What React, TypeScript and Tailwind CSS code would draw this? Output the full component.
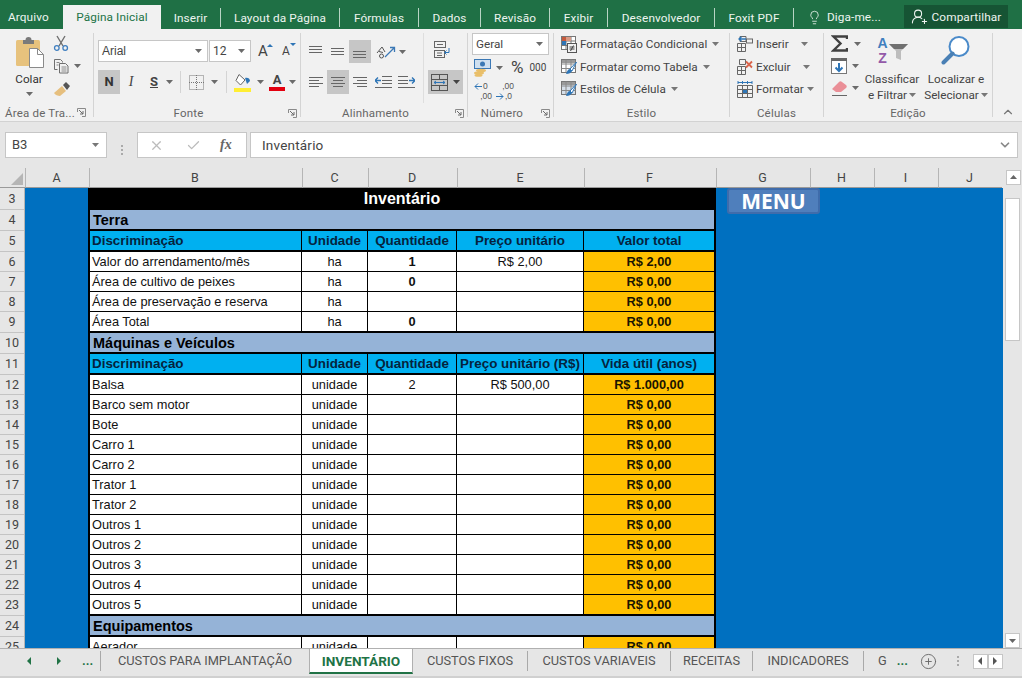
import React from "react";
import { Lightbulb, UserRoundPlus, X, Check, CirclePlus, ChevronUp, ChevronDown } from "lucide-react";

const Caret = ({ c = "#6b6b6b" }: { c?: string }) => (
  <svg width="7" height="4" viewBox="0 0 7 4" className="shrink-0"><path d="M0 0h7L3.5 4z" fill={c} /></svg>
);

const Launcher = () => (
  <svg width="9" height="9" viewBox="0 0 9 9" className="shrink-0">
    <path d="M.5 4V.5H8.5V8.500H5" fill="none" stroke="#8a8a8a" />
    <path d="M2 2l4 4M6 3v3H3" fill="none" stroke="#6b6b6b" />
  </svg>
);

const Sep = ({ h = "h-[84px]" }: { h?: string }) => <div className={`w-px ${h} mt-[4px] bg-[#d4d4d4] shrink-0`} />;

const Group = ({ w, label, launcher, labelLeft, children }: { w: string; label: string; launcher?: boolean; labelLeft?: boolean; children: React.ReactNode }) => (
  <div className={`${w} flex flex-col shrink-0`}>
    <div className="h-[75px] flex">{children}</div>
    <div className={`h-[17px] flex items-center text-[#666] text-[11.500px] tracking-[0.2px] ${labelLeft ? "pl-[5px] pr-[7px] justify-between" : launcher ? "justify-center relative pr-[17px]" : "justify-center"}`}>
      <span>{label}</span>
      {launcher && (labelLeft ? <Launcher /> : <span className="absolute right-[3px] top-[5px] flex"><Launcher /></span>)}
    </div>
  </div>
);

const Lines = ({ rows, c = "#666" }: { rows: [number, number, number][]; c?: string }) => (
  <svg width="16" height="14" viewBox="0 0 16 14">
    {rows.map(([y, a, b], i) => <path key={i} d={`M${a} ${y + 0.5}H${b}`} stroke={c} />)}
  </svg>
);

const Btn = ({ on, children, w = "w-[22px]", h = "h-full" }: { on?: boolean; children: React.ReactNode; w?: string; h?: string }) => (
  <div className={`${w} ${h} flex items-center justify-center gap-[4px] shrink-0 ${on ? "bg-[#c6c6c6]" : ""}`}>{children}</div>
);

const PasteIcon = () => (
  <svg width="29" height="32" viewBox="0 0 29 32" className="ml-[3px]">
    <rect x="0" y="4" width="24" height="26" rx="1.5" fill="#e7c27d" />
    <path d="M7 4h2.500a3 3 0 0 1 6 0H18v4H7z" fill="#7a7a7a" />
    <path d="M13.500 12.500h8l6 6v13h-14z" fill="#fff" stroke="#8a8a8a" />
    <path d="M21.500 12.500v6h6" fill="none" stroke="#8a8a8a" />
  </svg>
);
const CutIcon = () => (
  <svg width="16" height="16" viewBox="0 0 16 16" fill="none">
    <path d="M4 1l6 10M12 1L6 11" stroke="#6f6f6f" strokeWidth="1.400" />
    <circle cx="3.800" cy="13" r="2.300" stroke="#3f7fc0" strokeWidth="1.300" />
    <circle cx="12.200" cy="13" r="2.300" stroke="#3f7fc0" strokeWidth="1.300" />
  </svg>
);
const CopyIcon = () => (
  <svg width="16" height="16" viewBox="0 0 16 16" fill="none" stroke="#6f6f6f">
    <path d="M1.500 1.500h6l2 2v1M1.500 1.500v10h3" />
    <path d="M6.500 5.500h6l2.500 2.500v7h-8.500z" fill="#f1f1f1" />
    <path d="M3.500 4.500h3M3.500 7h2M8.500 9h5M8.500 11h5M8.500 13h5" stroke="#8a8a8a" />
  </svg>
);
const BrushIcon = () => (
  <svg width="18" height="16" viewBox="0 0 18 16">
    <path d="M1 12L9 5l4 5-6 5c-2 0-5-1-6-3z" fill="#e6bf7e" />
    <path d="M10 4l3-3 4 4-3 4z" fill="#555" />
  </svg>
);
const BordersIcon = () => (
  <svg width="15" height="15" viewBox="0 0 15 15" fill="none" stroke="#777" strokeDasharray="1 1">
    <path d="M.5.500h14v14H.5zM7.500 0v15M0 7.500h15" />
  </svg>
);
const FillIcon = () => (
  <svg width="18" height="19" viewBox="0 0 18 19">
    <path d="M5 1.500L11 7l-4.500 5L2 7.500z" fill="#fff" stroke="#666" />
    <path d="M11 5c2-1 5 0 5 3l-3 3z" fill="#2e75b6" />
    <rect x="0" y="15" width="17" height="4" fill="#ffee33" />
  </svg>
);
const OrientIcon = () => (
  <svg width="20" height="16" viewBox="0 0 20 16" fill="none" stroke="#555">
    <path d="M1 9l5-6 3 5M3 7.500l4 1" />
    <circle cx="5.500" cy="12" r="2" />
    <path d="M9 13L18 4M14 3.500h4.500V8" stroke="#3b78b5" strokeWidth="1.300" />
  </svg>
);
const WrapIcon = () => (
  <svg width="17" height="17" viewBox="0 0 17 17" fill="none" stroke="#666">
    <rect x=".5" y=".5" width="11" height="6" />
    <rect x=".5" y="9.500" width="10" height="7" />
    <path d="M3 3.500h6M3 12h5M3 14.500h5" />
    <path d="M15 7v4.500h-4M12.500 9.500l-2 2 2 2" stroke="#2e75b6" />
  </svg>
);
const IndentIcon = ({ flip }: { flip?: boolean }) => (
  <svg width="17" height="14" viewBox="0 0 17 14" fill="none" className={flip ? "-scale-x-100" : ""}>
    <path d="M7 1.500h10M7 5.500h10M7 8.500h10M0 12.500h17" stroke="#666" />
    <path d="M0 5.500h6M3 2.500l-3 3 3 3" stroke="#2e75b6" strokeWidth="1.300" />
  </svg>
);
const MergeIcon = () => (
  <svg width="17" height="17" viewBox="0 0 17 17" fill="none" stroke="#555">
    <rect x=".5" y=".5" width="16" height="16" />
    <path d="M.5 5.500h16M.5 11.500h16M8.500 .5v5M8.500 11.500v5" />
    <path d="M3 8.500h11M5 7l-2 1.500L5 10M12 7l2 1.500L12 10" stroke="#2e75b6" />
  </svg>
);
const MoneyIcon = () => (
  <svg width="17" height="18" viewBox="0 0 17 18">
    <rect x=".5" y=".5" width="16" height="9" fill="#cfe0f0" stroke="#3b78b5" />
    <circle cx="8.500" cy="5" r="2.500" fill="#3b78b5" />
    <ellipse cx="7" cy="11.500" rx="5" ry="1.800" fill="#e9bf6a" />
    <ellipse cx="5" cy="14" rx="5" ry="1.800" fill="#e9bf6a" />
    <ellipse cx="4.500" cy="16.300" rx="4" ry="1.500" fill="#e9bf6a" />
  </svg>
);
const ArrowL = () => (
  <svg width="8" height="7" viewBox="0 0 8 7" fill="none" className="shrink-0"><path d="M8 3.500H1M4 .5l-3 3 3 3" stroke="#2e75b6" /></svg>
);
const ArrowR = () => (
  <svg width="8" height="7" viewBox="0 0 8 7" fill="none" className="shrink-0"><path d="M0 3.500h7M4 .5l3 3-3 3" stroke="#2e75b6" /></svg>
);
const GridBase = ({ c = "#777" }: { c?: string }) => (
  <>
    <rect x=".5" y=".5" width="14" height="13" fill="#fff" stroke={c} />
    <path d="M.5 5h14M.5 9.500h14M5 .5v13M10 .5v13" stroke={c} />
  </>
);
const CondIcon = () => (
  <svg width="16" height="17" viewBox="0 0 16 17" className="shrink-0">
    <GridBase />
    <rect x="1" y="1" width="4" height="4" fill="#c55a3c" />
    <rect x="5" y="1" width="5" height="4" fill="#d99b86" />
    <rect x="1" y="5" width="4" height="4" fill="#2e75b6" />
    <rect x="6.500" y="7.500" width="9" height="9" fill="#f1f1f1" stroke="#555" />
    <path d="M8.500 11h5M8.500 13h5M12.500 9.500l-3 5.500" stroke="#444" />
  </svg>
);
const TableIcon = ({ blue }: { blue?: boolean }) => (
  <svg width="16" height="16" viewBox="0 0 16 16" className="shrink-0">
    <rect x=".5" y=".5" width="14" height="13" fill={blue ? "#d6dfe9" : "#fff"} stroke="#777" />
    <rect x="1" y="1" width="13" height="3" fill="#9a9a9a" />
    <path d="M.5 5h14M.5 9.500h14M5 .5v13M10 .5v13" stroke="#888" />
    <path d="M15.500 3L9 10l2 2z" fill="#fff" stroke="#2e75b6" />
    <path d="M9 10c-2 0-3 2-4 5 3 0 5-1 6-3z" fill="#2e75b6" />
  </svg>
);
const InsIcon = () => (
  <svg width="16" height="16" viewBox="0 0 16 16" fill="none" className="shrink-0">
    <path d="M.5 7.500h8v8h-8zM4.500 7.500v8M.5 11.500h8M3 .5h6v5H3z" stroke="#666" />
    <rect x="9.500" y="3" width="6" height="4" stroke="#666" />
    <path d="M9 3H2M4.500 .8L2 3l2.500 2.200" stroke="#2e75b6" strokeWidth="1.300" />
  </svg>
);
const DelIcon = () => (
  <svg width="16" height="16" viewBox="0 0 16 16" fill="none" className="shrink-0">
    <path d="M.5 7.500h8v8h-8zM4.500 7.500v8M.5 11.500h8M2.500.5h6v5h-6z" stroke="#666" />
    <path d="M9 2.500l6 6M15 2.500l-6 6" stroke="#d9634a" strokeWidth="1.800" />
  </svg>
);
const FmtIcon = () => (
  <svg width="16" height="17" viewBox="0 0 16 17" fill="none" className="shrink-0">
    <path d="M.5 4.500h15v12H.5zM5.500 4.500v12M10.500 4.500v12M.5 8.500h15M.5 12.500h15" stroke="#666" />
    <rect x="6" y="9" width="4" height="3" fill="#2e75b6" />
    <path d="M1 1.500h14M1 0v3M15 0v3M5.500 0v3M10.500 0v3" stroke="#2e75b6" />
  </svg>
);
const SumIcon = () => (
  <svg width="17" height="17" viewBox="0 0 17 17"><path d="M16 4V1.500H2.500L9.500 8.500 2.500 15.500H16V13" fill="none" stroke="#404040" strokeWidth="2.400" /></svg>
);
const DownFill = () => (
  <svg width="16" height="16" viewBox="0 0 16 16">
    <rect x=".5" y=".5" width="15" height="15" fill="#fff" stroke="#777" />
    <rect x="0" y="0" width="16" height="3" fill="#666" />
    <path d="M8 5v8M4.500 9.500L8 13l3.500-3.500" fill="none" stroke="#2e75b6" strokeWidth="2" />
  </svg>
);
const Eraser = () => (
  <svg width="17" height="16" viewBox="0 0 17 16">
    <path d="M1 9l7-7c1-1 2-1 3 0l4 3c1 1 1 2 0 3l-5 4H5z" fill="#ea8f97" />
    <path d="M1 15.500h15" stroke="#666" />
  </svg>
);
const Funnel = () => (
  <svg width="19" height="16" viewBox="0 0 19 16"><path d="M0 0h19l-7 7v9l-5-2V7z" fill="#bdbdbd" /><path d="M0 0h19l-5 5H5z" fill="#707070" /></svg>
);
const Glass = () => (
  <svg width="30" height="30" viewBox="0 0 30 30" fill="none">
    <circle cx="18" cy="11.500" r="9.500" stroke="#4a8ac9" strokeWidth="2" fill="#fff" />
    <path d="M11.500 18.500L2.500 27.500" stroke="#4a80b5" strokeWidth="4" strokeLinecap="round" />
  </svg>
);

const tabs: [string, string][] = [["Inserir", "w-[60px]"], ["Layout da Página", "w-[119px]"], ["Fórmulas", "w-[79px]"], ["Dados", "w-[62px]"], ["Revisão", "w-[69px]"], ["Exibir", "w-[58px]"], ["Desenvolvedor", "w-[107px]"], ["Foxit PDF", "w-[79px]"]];

const TitleBar = () => (
  <div className="h-[29px] bg-[#1f7045] flex text-[#eef5f0] shrink-0 tracking-[0.1px] text-[11.800px]">
    <div className="w-[63px] shrink-0 pl-[8px] pt-[9px] leading-[17px]">Arquivo</div>
    <div className="w-[98px] shrink-0 mt-[5px] bg-[#f1f1f1] text-[#217346] flex items-center justify-center">Página Inicial</div>
    {tabs.map(([t, w]) => (
      <div key={t} className={`${w} shrink-0 flex items-center h-full pt-[5px]`}>
        <div className="flex-1 text-center pt-[1px]">{t}</div>
        <div className="w-px h-[19px] bg-[#b8d4c4]" />
      </div>
    ))}
    <div className="flex items-center pt-[5px] pl-[13px] gap-[5px] w-[110px] shrink-0">
      <Lightbulb size={15} strokeWidth={1.300} className="shrink-0" />
      <span>Diga-me...</span>
    </div>
    <div className="w-[104px] h-[23px] mt-[5px] bg-[#165434] flex items-center justify-center gap-[4px] shrink-0">
      <UserRoundPlus size={17} strokeWidth={1.500} className="shrink-0" />
      <span>Compartilhar</span>
    </div>
  </div>
);

const Ribbon = () => (
  <div className="h-[93px] bg-[#f1f1f1] border-b border-[#d2d2d2] flex shrink-0 text-[#444] text-[11.700px]">
    <Group w="w-[93px]" label="Área de Tra..." launcher labelLeft>
      <div className="ml-[11px] w-[36px] flex flex-col items-center pt-[7px]">
        <PasteIcon />
        <span className="mt-[3px] leading-[16px] text-[#333]">Colar</span>
        <div className="mt-[5px]"><Caret /></div>
      </div>
      <div className="ml-[6px] pt-[6px] flex flex-col gap-[7px]">
        <CutIcon />
        <div className="flex items-center gap-[5px]"><CopyIcon /><Caret /></div>
        <BrushIcon />
      </div>
    </Group>
    <Sep />
    <Group w="w-[206px]" label="Fonte" launcher>
      <div className="pl-[4px] pt-[11px] flex flex-col gap-[8px]">
        <div className="flex items-center h-[22px] gap-[1px]">
          <div className="w-[110px] h-full bg-white border border-[#c6c6c6] flex items-center justify-between pl-[3px] pr-[5px] font-['Liberation_Sans',sans-serif] text-[12px]">
            <span>Arial</span><Caret />
          </div>
          <div className="w-[42px] h-full bg-white border border-[#c6c6c6] flex items-center justify-between pl-[3px] pr-[5px] text-[12px]">
            <span>12</span><Caret />
          </div>
          <div className="w-[22px] flex justify-center text-[15px] leading-none relative"><span>A</span><span className="absolute right-[1px] top-0 w-0 h-0 border-x-[3px] border-x-transparent border-b-[3px] border-b-[#2e75b6]" /></div>
          <div className="w-[22px] flex justify-center text-[12px] leading-none relative"><span>A</span><span className="absolute right-[1px] top-[-2px] w-0 h-0 border-x-[3px] border-x-transparent border-t-[3px] border-t-[#2e75b6]" /></div>
        </div>
        <div className="flex items-center h-[24px]">
          <Btn on><span className="font-bold text-[13px] text-[#333]">N</span></Btn>
          <Btn><span className="italic font-['Liberation_Serif',serif] text-[14px]">I</span></Btn>
          <Btn w="w-[24px]"><span className="font-bold text-[13px] underline">S</span></Btn>
          <div className="w-[7px] flex"><Caret /></div>
          <div className="w-px h-[22px] bg-[#d4d4d4] ml-[7px]" />
          <Btn w="w-[30px]"><BordersIcon /></Btn>
          <Caret />
          <div className="w-px h-[22px] bg-[#d4d4d4] ml-[8px]" />
          <div className="ml-[7px] flex items-center gap-[5px]"><FillIcon /><Caret /></div>
          <div className="ml-[5px] flex items-center gap-[4px]">
            <div className="w-[16px] flex flex-col items-center">
              <span className="font-bold text-[13px] leading-[14px] text-[#444]">A</span>
              <span className="w-[16px] h-[4px] bg-[#e3000f]" />
            </div>
            <Caret />
          </div>
        </div>
      </div>
    </Group>
    <Sep />
    <Group w="w-[166px]" label="Alinhamento" launcher>
      <div className="pl-[4px] pt-[11px] flex flex-col gap-[7px] w-[122px]">
        <div className="flex h-[23px] items-center">
          <Btn><Lines rows={[[1, 1, 14], [4, 1, 14], [7, 1, 14]]} /></Btn>
          <Btn><Lines rows={[[3, 1, 14], [6, 1, 14], [9, 1, 14]]} /></Btn>
          <Btn on><Lines rows={[[6, 1, 14], [9, 1, 14], [12, 1, 14]]} /></Btn>
          <div className="ml-[5px] flex items-center gap-[3px]"><OrientIcon /><Caret /></div>
        </div>
        <div className="flex h-[24px] items-center">
          <Btn><Lines rows={[[2, 1, 15], [5, 1, 11], [8, 1, 15], [11, 1, 11]]} /></Btn>
          <Btn on><Lines rows={[[2, 1, 15], [5, 3, 13], [8, 1, 15], [11, 3, 13]]} /></Btn>
          <Btn><Lines rows={[[2, 1, 15], [5, 5, 15], [8, 1, 15], [11, 5, 15]]} /></Btn>
          <Btn w="w-[24px]"><IndentIcon /></Btn>
          <Btn w="w-[22px]"><IndentIcon flip /></Btn>
        </div>
      </div>
      <div className="w-px h-[70px] mt-[4px] bg-[#dedede]" />
      <div className="pl-[4px] pt-[9px] flex flex-col gap-[9px] items-start">
        <Btn w="w-[28px]" h="h-[23px]"><WrapIcon /></Btn>
        <div className="w-[35px] h-[24px] bg-[#c6c6c6] flex items-center justify-center gap-[5px]"><MergeIcon /><Caret c="#444" /></div>
      </div>
    </Group>
    <Sep />
    <Group w="w-[85px]" label="Número" launcher>
      <div className="pl-[4px] pt-[4px] flex flex-col">
        <div className="w-[77px] h-[22px] bg-white border border-[#c6c6c6] flex items-center justify-between pl-[3px] pr-[5px]">
          <span>Geral</span><Caret />
        </div>
        <div className="flex items-center mt-[3px] h-[19px] pl-[2px]">
          <MoneyIcon />
          <div className="ml-[5px]"><Caret /></div>
          <span className="ml-[8px] text-[17px] leading-none text-[#444]">%</span>
          <span className="ml-[6px] text-[10px] leading-none">000</span>
        </div>
        <div className="flex items-start mt-[4px] pl-[2px] gap-[4px] text-[8.500px] text-[#555] font-['Liberation_Sans',sans-serif] leading-[10px]">
          <div className="flex flex-col w-[18px]">
            <div className="flex items-center h-[10px] gap-[1px]"><ArrowL /><span>0</span></div>
            <div className="h-[10px] text-right">,00</div>
          </div>
          <div className="flex flex-col w-[18px]">
            <div className="h-[10px] text-right">,00</div>
            <div className="flex items-center h-[10px] gap-[1px]"><ArrowR /><span>,0</span></div>
          </div>
        </div>
      </div>
    </Group>
    <Sep />
    <Group w="w-[175px]" label="Estilo">
      <div className="pl-[7px] pt-[4px] flex flex-col gap-[0px]">
        {[["Formatação Condicional", <CondIcon key="a" />], ["Formatar como Tabela", <TableIcon key="b" />], ["Estilos de Célula", <TableIcon key="c" blue />]].map(([t, ic], i) => (
          <div key={i} className="h-[22.500px] flex items-center gap-[3px]">
            {ic}<span>{t}</span><div className="ml-[2px]"><Caret c="#777" /></div>
          </div>
        ))}
      </div>
    </Group>
    <Sep />
    <Group w="w-[93px]" label="Células">
      <div className="pl-[7px] pt-[4px] flex flex-col">
        <div className="h-[22.500px] flex items-center gap-[3px]"><InsIcon /><span>Inserir</span><div className="ml-[9px]"><Caret c="#777" /></div></div>
        <div className="h-[22.500px] flex items-center gap-[3px]"><DelIcon /><span>Excluir</span><div className="ml-[9px]"><Caret c="#777" /></div></div>
        <div className="h-[22.500px] flex items-center gap-[3px]"><FmtIcon /><span>Formatar</span><Caret c="#777" /></div>
      </div>
    </Group>
    <Sep />
    <Group w="w-[168px]" label="Edição">
      <div className="pl-[7px] pt-[6px] flex flex-col gap-[6px] w-[40px]">
        <div className="flex items-center gap-[6px]"><SumIcon /><Caret /></div>
        <div className="flex items-center gap-[5px]"><DownFill /><Caret /></div>
        <div className="flex items-center gap-[4px]"><Eraser /><Caret /></div>
      </div>
      <div className="w-[62px] ml-[-3px] flex flex-col items-center pt-[7px]">
        <div className="h-[35px] w-[31px] flex items-start">
          <div className="flex flex-col font-bold text-[14px] leading-[15px] font-['Liberation_Sans',sans-serif] items-center w-[12px]">
            <span className="text-[#3f7fbf]">A</span><span className="text-[#9359a8]">Z</span>
          </div>
          <div className="mt-[8px]"><Funnel /></div>
        </div>
        <span className="leading-[16px]">Classificar</span>
        <span className="leading-[16px] flex items-center gap-[2px]">e Filtrar <Caret c="#777" /></span>
      </div>
      <div className="w-[64px] ml-[1px] flex flex-col items-center pt-[6px]">
        <div className="h-[36px]"><Glass /></div>
        <span className="leading-[16px]">Localizar e</span>
        <span className="leading-[16px] flex items-center gap-[2px]">Selecionar <Caret c="#777" /></span>
      </div>
    </Group>
    <Sep />
    <div className="flex-1 flex items-end justify-center pb-[2px]"><ChevronUp size={14} color="#777" /></div>
  </div>
);

const FormulaBar = () => (
  <div className="h-[46px] flex pt-[10px] pl-[5px] shrink-0 text-[#444]">
    <div className="w-[102px] h-[26px] bg-white border border-[#c6c6c6] flex items-center justify-between pl-[6px] pr-[7px] text-[13px]">
      <span>B3</span><Caret c="#777" />
    </div>
    <div className="w-[30px] flex items-center justify-center gap-0">
      <div className="flex flex-col gap-[2px]">
        <span className="w-[2px] h-[2px] bg-[#aaa]" /><span className="w-[2px] h-[2px] bg-[#aaa]" /><span className="w-[2px] h-[2px] bg-[#aaa]" />
      </div>
    </div>
    <div className="w-[110px] h-[26px] bg-white border border-[#c6c6c6] flex items-center text-[#bbb] pl-[11px]">
      <X size={15} strokeWidth={2} />
      <Check size={15} strokeWidth={2} className="ml-[22px]" />
      <span className="ml-[19px] font-['Liberation_Serif',serif] italic font-bold text-[14px] text-[#666]">fx</span>
    </div>
    <div className="w-[768px] ml-[3px] h-[26px] bg-white border border-[#c6c6c6] flex items-center justify-between pl-[11px] pr-[5px]">
      <span className="text-[13.500px] tracking-[0.2px]">Inventário</span>
      <ChevronDown size={14} strokeWidth={3} color="#888" />
    </div>
  </div>
);

const cols: [string, string][] = [["A", "w-[64px]"], ["B", "w-[213px]"], ["C", "w-[66px]"], ["D", "w-[89px]"], ["E", "w-[127px]"], ["F", "w-[132px]"], ["G", "w-[94px]"], ["H", "w-[64px]"], ["I", "w-[64px]"], ["J", "w-[64px]"]];

const ColHeaders = () => (
  <div className="h-[20px] flex shrink-0 text-[#444] text-[12.500px]">
    <div className="w-[25px] h-full border-b border-[#9a9a9a] flex items-end justify-end pr-[2px] pb-[2px]">
      <div className="w-0 h-0 border-l-[12px] border-l-transparent border-b-[12px] border-b-[#b5b5b5]" />
    </div>
    {cols.map(([c, w]) => (
      <div key={c} className={`${w} h-full border-l border-b border-l-[#b5b5b5] border-b-[#9a9a9a] flex items-center justify-center pr-[2px]`}>{c}</div>
    ))}
  </div>
);

type Row = { n: number; h: string };
const rowsInfo: Row[] = [
  { n: 3, h: "h-[22px]" }, { n: 4, h: "h-[21px]" }, { n: 5, h: "h-[21px]" },
  ...[6, 7, 8].map((n) => ({ n, h: "h-[20px]" })),
  { n: 9, h: "h-[21px]" }, { n: 10, h: "h-[21px]" }, { n: 11, h: "h-[21px]" },
  ...[12, 13, 14, 15, 16, 17, 18, 19, 20, 21, 22].map((n) => ({ n, h: "h-[20px]" })),
  { n: 23, h: "h-[21px]" }, { n: 24, h: "h-[21px]" }, { n: 25, h: "h-[20px]" },
];

const colGrid = "grid grid-cols-[212px_66px_89px_127px_130px] items-stretch";
const cell = "border-r border-black flex items-center justify-center";

const Section = ({ t }: { t: string }) => (
  <div className="h-[21px] shrink-0 bg-[#95b3d7] border-b-2 border-black flex items-center pl-[3px] font-bold text-[14.500px] text-black">{t}</div>
);
const Head = ({ d, e, f }: { d: string; e: string; f: string }) => (
  <div className={`h-[21px] shrink-0 ${colGrid} bg-[#00b0f0] border-b-2 border-black font-bold text-[13.400px] text-[#05233d]`}>
    <div className={`${cell} !justify-start pl-[2px]`}>{d}</div>
    <div className={cell}>Unidade</div>
    <div className={cell}>Quantidade</div>
    <div className={cell}>{e}</div>
    <div className="flex items-center justify-center">{f}</div>
  </div>
);
const Data = ({ name, u, q, qb, p, t, thick }: { name: string; u: string; q?: string; qb?: boolean; p?: string; t: string; thick?: boolean }) => (
  <div className={`${thick ? "h-[21px] border-b-2" : "h-[20px] border-b"} shrink-0 ${colGrid} bg-white border-black text-[12.800px] text-[#111]`}>
    <div className={`${cell} !justify-start pl-[2px]`}>{name}</div>
    <div className={cell}>{u}</div>
    <div className={`${cell} ${qb ? "font-bold" : ""}`}>{q}</div>
    <div className={cell}>{p}</div>
    <div className="bg-[#ffc000] flex items-center justify-center font-bold text-[#1a1400]">{t}</div>
  </div>
);

const maquinas = ["Barco sem motor", "Bote", "Carro 1", "Carro 2", "Trator 1", "Trator 2", "Outros 1", "Outros 2", "Outros 3", "Outros 4", "Outros 5"];

const Sheet = () => (
  <div className="flex-1 min-h-0 flex overflow-hidden">
    <div className="w-[25px] flex flex-col shrink-0 text-[#444] text-[12.500px] border-r border-[#b5b5b5]">
      {rowsInfo.map((r) => (
        <div key={r.n} className={`${r.h} shrink-0 border-b border-[#c4c4c4] flex items-center justify-center`}>{r.n}</div>
      ))}
    </div>
    <div className="w-[978px] bg-[#0070c0] flex relative shrink-0 pl-[63px] font-['Liberation_Sans',sans-serif]">
      <div className="w-[628px] shrink-0 border-x-2 border-black flex flex-col bg-white">
        <div className="h-[22px] bg-black text-white font-bold text-[16px] flex items-center justify-center shrink-0">Inventário</div>
        <Section t="Terra" />
        <Head d="Discriminação" e="Preço unitário" f="Valor total" />
        <Data name="Valor do arrendamento/mês" u="ha" q="1" qb p="R$ 2,00" t="R$ 2,00" />
        <Data name="Área de cultivo de peixes" u="ha" q="0" qb t="R$ 0,00" />
        <Data name="Área de preservação e reserva" u="ha" t="R$ 0,00" />
        <Data name="Área Total" u="ha" q="0" qb t="R$ 0,00" thick />
        <Section t="Máquinas e Veículos" />
        <Head d="Discriminação" e="Preço unitário (R$)" f="Vida útil (anos)" />
        <Data name="Balsa" u="unidade" q="2" p="R$ 500,00" t="R$ 1.000,00" />
        {maquinas.map((m, i) => (
          <Data key={m} name={m} u="unidade" t="R$ 0,00" thick={i === maquinas.length - 1} />
        ))}
        <Section t="Equipamentos" />
        <Data name="Aerador" u="unidade" t="R$ 0,00" />
      </div>
      <div className="absolute left-[702px] top-0 w-[93px] h-[26px] rounded-[3px] bg-[#4f7fbc] border-2 border-[#3f6cab] flex items-center justify-center text-white font-bold text-[21px] font-['Open_Sans',sans-serif]">MENU</div>
    </div>
    <div className="flex-1 flex flex-col items-center bg-[#e6e6e6]">
      <div className="w-[15px] h-[143px] mt-[10px] bg-white border border-[#c6c6c6] shrink-0" />
      <div className="flex-1" />
      <div className="w-[15px] h-[15px] bg-white border border-[#c6c6c6] flex items-center justify-center shrink-0"><Caret c="#666" /></div>
    </div>
  </div>
);

const SheetTab = ({ t, w }: { t: string; w: string }) => (
  <div className="flex items-center h-[24px]">
    <div className={`${w} text-center`}>{t}</div>
    <div className="w-px h-[20px] bg-[#a9a9a9]" />
  </div>
);

const SheetTabs = () => (
  <div className="h-[30px] border-t border-[#b0b0b0] border-b-2 border-b-[#d0d0d0] shrink-0 flex items-start text-[#555] text-[12.800px] relative">
    <div className="w-[100px] h-[24px] flex items-center pl-[27px]">
      <span className="w-0 h-0 border-y-[4px] border-y-transparent border-r-[4px] border-r-[#217346]" />
      <span className="ml-[26px] w-0 h-0 border-y-[4px] border-y-transparent border-l-[4px] border-l-[#217346]" />
      <span className="ml-[21px] font-bold text-[#217346] leading-none">...</span>
    </div>
    <div className="w-px h-[20px] bg-[#a9a9a9] mt-[2px]" />
    <div className="w-[208px] h-[24px] flex items-center justify-center">CUSTOS PARA IMPLANTAÇÃO</div>
    <div className="w-[104px] h-[25px] bg-white border-x border-[#b0b0b0] border-b-2 border-b-[#217346] flex items-center justify-center font-bold text-[#217346] text-[13.600px]">INVENTÁRIO</div>
    <SheetTab t="CUSTOS FIXOS" w="w-[114px]" />
    <SheetTab t="CUSTOS VARIAVEIS" w="w-[142px]" />
    <SheetTab t="RECEITAS" w="w-[81px]" />
    <SheetTab t="INDICADORES" w="w-[110px]" />
    <div className="flex items-center h-[24px] pl-[14px]">
      <span>G</span>
      <span className="ml-[10px] font-bold text-[#217346] leading-none">...</span>
      <CirclePlus size={17} strokeWidth={1.300} color="#666" className="ml-[12px]" />
      <div className="ml-[20px] flex flex-col gap-[2px]">
        <span className="w-[2px] h-[2px] bg-[#aaa]" /><span className="w-[2px] h-[2px] bg-[#aaa]" /><span className="w-[2px] h-[2px] bg-[#aaa]" />
      </div>
      <div className="ml-[14px] w-[15px] h-[15px] bg-white border border-[#c6c6c6] flex items-center justify-center"><span className="w-0 h-0 border-y-[4px] border-y-transparent border-r-[4px] border-r-[#555]" /></div>
      <div className="w-[15px] h-[15px] bg-white border border-[#c6c6c6] flex items-center justify-center"><span className="w-0 h-0 border-y-[4px] border-y-transparent border-l-[4px] border-l-[#555]" /></div>
    </div>
  </div>
);

export default function App() {
  return (
    <div className="w-[1022px] h-[678px] overflow-hidden flex flex-col bg-[#e6e6e6] font-['Roboto',sans-serif] text-[12.500px] leading-[16px] relative whitespace-nowrap">
      <TitleBar />
      <Ribbon />
      <FormulaBar />
      <ColHeaders />
      <Sheet />
      <SheetTabs />
      <div className="absolute left-[1006px] top-[170px] w-[15px] h-[15px] bg-white border border-[#c6c6c6] flex items-center justify-center rotate-180"><Caret c="#666" /></div>
    </div>
  );
}
